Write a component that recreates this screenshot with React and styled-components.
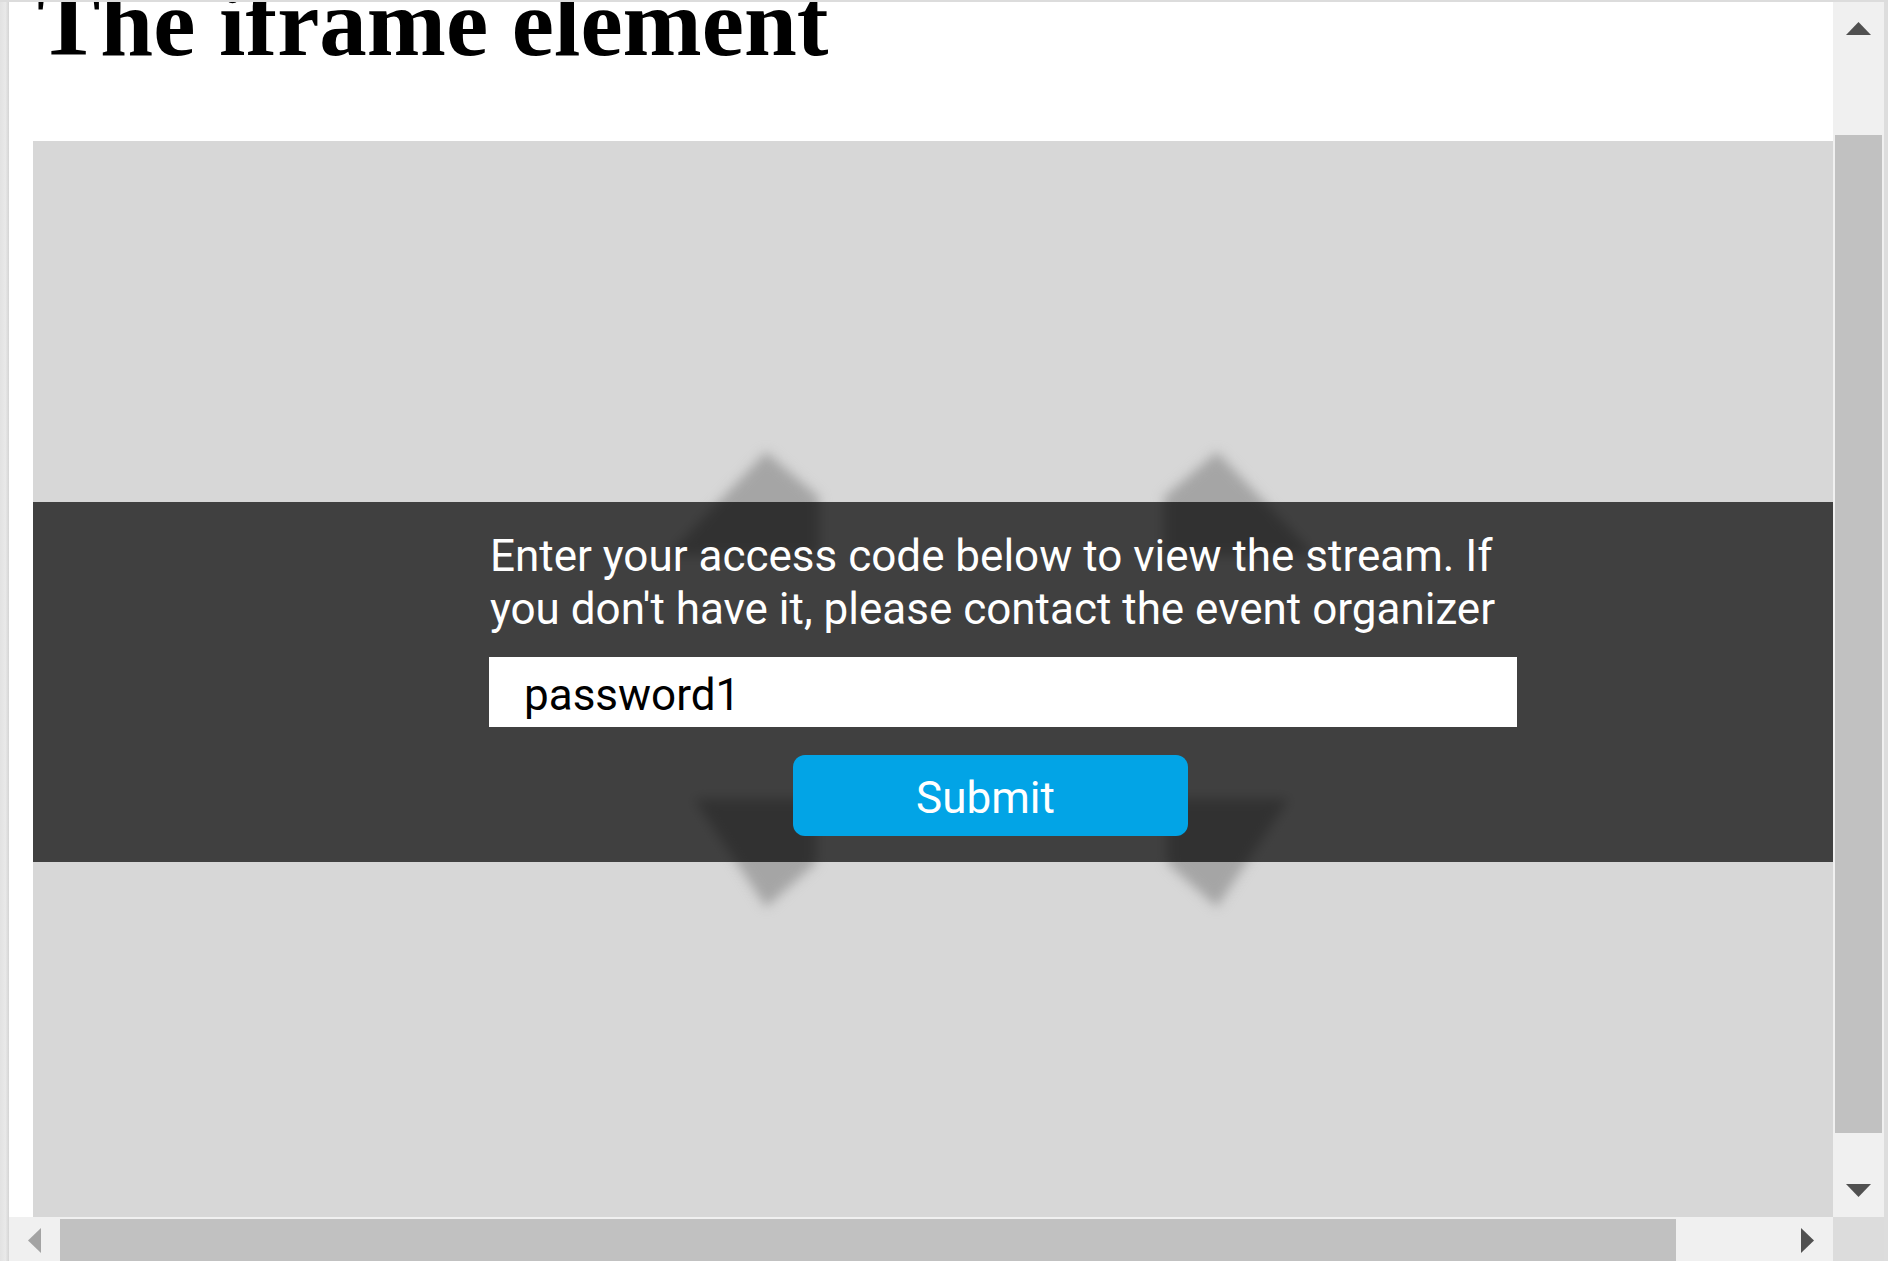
import React from "react";
import styled, { createGlobalStyle } from "styled-components";

const Global = createGlobalStyle`
  html, body { margin: 0; padding: 0; background: #ffffff; overflow: hidden; }
  #root { width: 1888px; height: 1278px; overflow: hidden; }
`;

const Stage = styled.div`
  width: 1888px;
  height: 1278px;
  display: flex;
  flex-direction: column;
  background: #ffffff;
`;

const TopEdge = styled.div`
  height: 2px;
  background: #dcdcdc;
  flex: none;
`;

const WindowRow = styled.div`
  display: flex;
  flex-direction: row;
  height: 1259px;
  flex: none;
`;

const LeftEdge = styled.div`
  width: 9px;
  flex: none;
  background: linear-gradient(to right, #e2e2e2, #e9e9e9 60%, #d4d4d4);
`;

const RightEdge = styled.div`
  width: 4px;
  flex: none;
  background: #dddddd;
`;

const MainColumn = styled.div`
  width: 1824px;
  flex: none;
  display: flex;
  flex-direction: column;
`;

const SideColumn = styled.div`
  width: 51px;
  flex: none;
  display: flex;
  flex-direction: column;
`;

const Viewport = styled.div`
  height: 1215px;
  flex: none;
  overflow: hidden;
  background: #ffffff;
  padding-left: 24px;
  box-sizing: border-box;
`;

const Heading = styled.h1`
  margin: -26px 0 70px 4px;
  font-family: "Liberation Serif", "Times New Roman", serif;
  font-weight: bold;
  font-size: 95px;
  line-height: 95px;
  color: #000000;
  white-space: nowrap;
`;

const Frame = styled.div`
  position: relative;
  width: 1916px;
  height: 1100px;
  background: #d7d7d7;
  display: flex;
  flex-direction: column;
  overflow: hidden;
`;

const Backdrop = styled.svg`
  position: absolute;
  left: 0;
  top: 0;
  width: 1916px;
  height: 1100px;
  filter: blur(6px);
`;

const Band = styled.div`
  position: relative;
  margin-top: 361px;
  height: 360px;
  background: rgba(0, 0, 0, 0.7);
  display: flex;
  flex-direction: column;
  padding-left: 456px;
  box-sizing: border-box;
`;

const Form = styled.form`
  width: 1028px;
  display: flex;
  flex-direction: column;
  padding-top: 28px;
  margin: 0;
`;

const Prompt = styled.p`
  margin: 0 0 21px 1px;
  font-family: Roboto, "Noto Sans", sans-serif;
  font-size: 44px;
  line-height: 52.8px;
  color: #ffffff;
`;

const CodeInput = styled.input`
  width: 100%;
  height: 70px;
  box-sizing: border-box;
  border: none;
  outline: none;
  border-radius: 0;
  padding: 6px 0 0 35px;
  margin: 0;
  background: #ffffff;
  font-family: Roboto, "Noto Sans", sans-serif;
  font-size: 44px;
  color: #000000;
`;

const SubmitButton = styled.button`
  margin: 28px 0 0 304px;
  width: 395px;
  height: 81px;
  border: none;
  border-radius: 12px;
  background: #02a4e6;
  color: #ffffff;
  font-family: Roboto, "Noto Sans", sans-serif;
  font-size: 44px;
  padding: 5px 10px 0 0;
  cursor: pointer;
`;

const HScrollbar = styled.div`
  height: 44px;
  flex: none;
  display: flex;
  flex-direction: row;
  background: #f0f0f0;
`;

const HArrowButton = styled.div`
  width: 51px;
  flex: none;
  display: flex;
  align-items: center;
  justify-content: center;
  padding-top: 2px;
  box-sizing: border-box;
`;

const HTrack = styled.div`
  flex: 1;
  display: flex;
  padding-top: 2px;
`;

const HThumb = styled.div`
  width: 1616px;
  height: 42px;
  background: #c1c1c1;
`;

const VScrollbar = styled.div`
  height: 1215px;
  flex: none;
  display: flex;
  flex-direction: column;
  background: #f0f0f0;
`;

const VArrowButton = styled.div`
  height: 53px;
  flex: none;
  display: flex;
  align-items: center;
  justify-content: center;
`;

const VTrack = styled.div`
  flex: 1;
  display: flex;
  flex-direction: column;
  padding: 0 2px;
`;

const VThumb = styled.div`
  margin-top: 80px;
  height: 998px;
  background: #c1c1c1;
`;

const Corner = styled.div`
  height: 44px;
  flex: none;
  background: #dcdcdc;
`;

const Arrow = ({ dir, color }) => {
  const horizontal = dir === "left" || dir === "right";
  const w = horizontal ? 13 : 25;
  const h = horizontal ? 25 : 13;
  const pts = {
    up: `0,${h} ${w / 2},0 ${w},${h}`,
    down: `0,0 ${w},0 ${w / 2},${h}`,
    left: `${w},0 0,${h / 2} ${w},${h}`,
    right: `0,0 ${w},${h / 2} 0,${h}`,
  }[dir];
  return (
    <svg width={w} height={h} viewBox={`0 0 ${w} ${h}`}>
      <polygon points={pts} fill={color} />
    </svg>
  );
};

/* side = -1 for the left shape (its outer edge extends left), 1 for the right one */
const Shape = ({ cx, side }) => {
  const o = side;
  const top = [
    [cx, 311],
    [cx + o * 98, 414],
    [cx - o * 53, 414],
    [cx - o * 53, 356],
  ];
  const bottom = [
    [cx + o * 72, 658],
    [cx - o * 50, 658],
    [cx - o * 50, 722],
    [cx, 766],
  ];
  const pts = (arr) => arr.map((p) => p.join(",")).join(" ");
  return (
    <g fill="#a5a5a5">
      <polygon points={pts(top)} />
      <polygon points={pts(bottom)} />
    </g>
  );
};

export default function App() {
  return (
    <>
      <Global />
      <Stage>
        <TopEdge />
        <WindowRow>
          <LeftEdge />
          <MainColumn>
            <Viewport>
              <Heading>The iframe element</Heading>
              <Frame>
                <Backdrop viewBox="0 0 1916 1100">
                  <Shape cx={733} side={-1} />
                  <Shape cx={1184} side={1} />
                </Backdrop>
                <Band>
                  <Form onSubmit={(e) => e.preventDefault()}>
                    <Prompt>
                      Enter your access code below to view the stream. If you don't have it, please contact the event organizer
                    </Prompt>
                    <CodeInput type="text" defaultValue="password1" />
                    <SubmitButton type="submit">Submit</SubmitButton>
                  </Form>
                </Band>
              </Frame>
            </Viewport>
            <HScrollbar>
              <HArrowButton>
                <Arrow dir="left" color="#a3a3a3" />
              </HArrowButton>
              <HTrack>
                <HThumb />
              </HTrack>
              <HArrowButton>
                <Arrow dir="right" color="#505050" />
              </HArrowButton>
            </HScrollbar>
          </MainColumn>
          <SideColumn>
            <VScrollbar>
              <VArrowButton>
                <Arrow dir="up" color="#505050" />
              </VArrowButton>
              <VTrack>
                <VThumb />
              </VTrack>
              <VArrowButton>
                <Arrow dir="down" color="#505050" />
              </VArrowButton>
            </VScrollbar>
            <Corner />
          </SideColumn>
          <RightEdge />
        </WindowRow>
      </Stage>
    </>
  );
}
